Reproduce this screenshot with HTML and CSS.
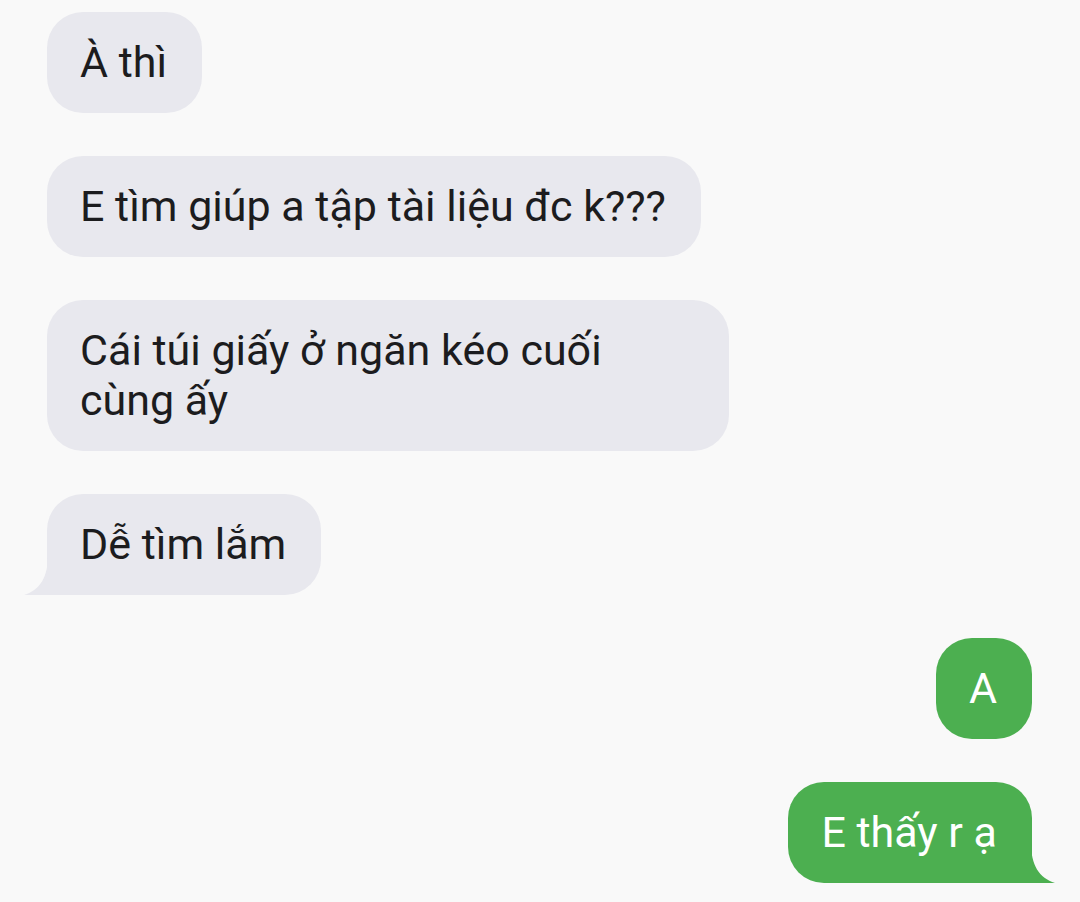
FILE: index.html
```html
<!DOCTYPE html>
<html lang="vi">
<head>
<meta charset="utf-8">
<title>Chat</title>
<link rel="stylesheet" href="styles.css">
</head>
<body>
<main class="thread">
  <div class="bubble in">À thì</div>
  <div class="bubble in">E tìm giúp a tập tài liệu đc k???</div>
  <div class="bubble in">Cái túi giấy ở ngăn kéo cuối cùng ấy</div>
  <div class="bubble in tail-left">Dễ tìm lắm<svg class="tail tail-l" viewBox="0 0 30 40" width="30" height="40"><path d="M24 0 C24 22 16 35 0 40 L30 40 L30 0 Z"/></svg></div>
  <div class="bubble out">A</div>
  <div class="bubble out tail-right">E thấy r ạ<svg class="tail tail-r" viewBox="0 0 30 40" width="30" height="40"><path d="M6 0 C6 22 14 35 30 40 L0 40 L0 0 Z"/></svg></div>
</main>
</body>
</html>
```

FILE: styles.css
```css
html, body {
  margin: 0;
  padding: 0;
  background: #f9f9f9;
}
body {
  font-family: Roboto, "Noto Sans", sans-serif;
  width: 1080px;
  height: 902px;
  overflow: hidden;
}
.thread {
  display: flex;
  flex-direction: column;
  gap: 43px;
  padding: 12px 48px 0 47px;
}
.bubble {
  position: relative;
  box-sizing: border-box;
  max-width: 682px;
  padding: 25px 35px 26px 33px;
  font-size: 43px;
  line-height: 50px;
  border-radius: 36px;
}
.in {
  align-self: flex-start;
  background: #e8e8ee;
  color: #1c1c1e;
}
.out {
  align-self: flex-end;
  background: #4caf50;
  color: #ffffff;
}
.tail-left {
  border-bottom-left-radius: 0;
}
.tail-right {
  border-bottom-right-radius: 0;
}
.tail {
  position: absolute;
  bottom: 0;
  display: block;
}
.tail-l {
  left: -23px;
  fill: #e8e8ee;
}
.tail-r {
  right: -23px;
  fill: #4caf50;
}
```
